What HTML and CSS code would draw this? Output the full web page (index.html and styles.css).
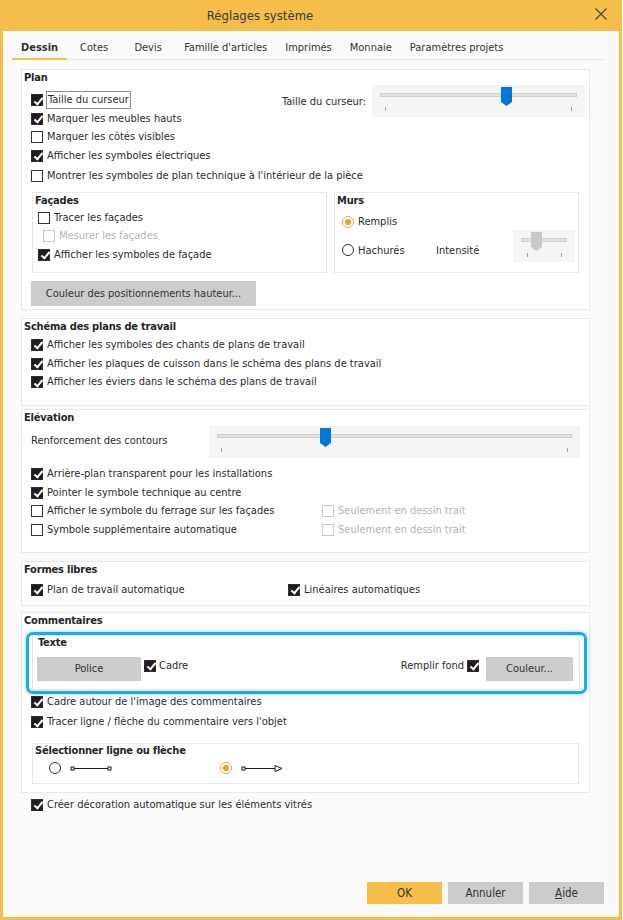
FILE: index.html
```html
<!DOCTYPE html>
<html lang="fr">
<head>
    <meta charset="UTF-8">
    <meta name="viewport" content="width=device-width, initial-scale=1.0">
    <title>Réglages système</title>
    <link rel="stylesheet" href="styles.css">
</head>
<body>
<div class="dialog">
    <div class="titlebar">
        <div class="title">Réglages système</div>
        <svg class="close" width="12" height="12" viewBox="0 0 12 12"><path d="M0.5 0.5L11.5 11.5M11.5 0.5L0.5 11.5" stroke="#454545" stroke-width="1.2" fill="none"/></svg>
    </div>

    <div class="tabs">
        <div class="tab active">Dessin</div>
        <div class="tab">Cotes</div>
        <div class="tab">Devis</div>
        <div class="tab">Famille d'articles</div>
        <div class="tab">Imprimés</div>
        <div class="tab">Monnaie</div>
        <div class="tab">Paramètres projets</div>
    </div>

    <div class="page">
        <!-- Plan -->
        <div class="group plan">
            <div class="group-title">Plan</div>
            <div class="plan-top">
                <div>
                    <div class="row"><span class="cb on"></span><span class="focus">Taille du curseur</span></div>
                    <div class="row"><span class="cb on"></span>Marquer les meubles hauts</div>
                    <div class="row"><span class="cb"></span>Marquer les côtés visibles</div>
                    <div class="row"><span class="cb on"></span>Afficher les symboles électriques</div>
                </div>
                <div class="slider-wrap">
                    <span>Taille du curseur:</span>
                    <div class="slider">
                        <svg width="213" height="32" viewBox="0 0 213 32">
                            <rect x="8.5" y="8.5" width="196" height="3" fill="#e2e4e4" stroke="#cdd0d0"/>
                            <path d="M13.5 22v4M199.5 22v4" stroke="#a0a0a0"/>
                            <path d="M129 2h11v15l-5.5 4l-5.5-4z" fill="#0078d7"/>
                        </svg>
                    </div>
                </div>
            </div>
            <div class="row montrer"><span class="cb"></span>Montrer les symboles de plan technique à l'intérieur de la pièce</div>

            <div class="subrow">
                <div class="box facades">
                    <div class="box-title">Façades</div>
                    <div class="row"><span class="cb"></span>Tracer les façades</div>
                    <div class="row indent dis"><span class="cb dis"></span>Mesurer les façades</div>
                    <div class="row"><span class="cb on"></span>Afficher les symboles de façade</div>
                </div>
                <div class="box murs">
                    <div class="box-title">Murs</div>
                    <div class="row remplis"><span class="rb on"></span>Remplis</div>
                    <div class="murs-row">
                        <div class="item hach"><span class="rb"></span>Hachurés</div>
                        <span class="intens">Intensité</span>
                        <div class="slider small">
                            <svg width="62" height="32" viewBox="0 0 62 32">
                                <rect x="8.5" y="8.5" width="45" height="3" fill="#e2e4e4" stroke="#cdd0d0"/>
                                <path d="M14.5 23v4M48.5 23v4" stroke="#a0a0a0"/>
                                <path d="M18 2h11v15l-5.5 4l-5.5-4z" fill="#c8c8c8"/>
                            </svg>
                        </div>
                    </div>
                </div>
            </div>

            <button class="btn hauteur">Couleur des positionnements hauteur...</button>
        </div>

        <!-- Schéma des plans de travail -->
        <div class="group schema">
            <div class="group-title">Schéma des plans de travail</div>
            <div class="rows">
                <div class="row"><span class="cb on"></span>Afficher les symboles des chants de plans de travail</div>
                <div class="row"><span class="cb on"></span>Afficher les plaques de cuisson dans le schéma des plans de travail</div>
                <div class="row"><span class="cb on"></span>Afficher les éviers dans le schéma des plans de travail</div>
            </div>
        </div>

        <!-- Elévation -->
        <div class="group elevation">
            <div class="group-title">Elévation</div>
            <div class="slider-row">
                <span>Renforcement des contours</span>
                <div class="slider">
                    <svg width="371" height="32" viewBox="0 0 371 32">
                        <rect x="8.5" y="8.5" width="354" height="3" fill="#e2e4e4" stroke="#cdd0d0"/>
                        <path d="M12.5 22v4M358.5 22v4" stroke="#a0a0a0"/>
                        <path d="M111 2h11v15l-5.5 4l-5.5-4z" fill="#0078d7"/>
                    </svg>
                </div>
            </div>
            <div class="rows">
                <div class="row"><span class="cb on"></span>Arrière-plan transparent pour les installations</div>
                <div class="row"><span class="cb on"></span>Pointer le symbole technique au centre</div>
                <div class="row">
                    <span class="item w287"><span class="cb"></span>Afficher le symbole du ferrage sur les façades</span>
                    <span class="item dis"><span class="cb dis"></span>Seulement en dessin trait</span>
                </div>
                <div class="row">
                    <span class="item w287"><span class="cb"></span>Symbole supplémentaire automatique</span>
                    <span class="item dis"><span class="cb dis"></span>Seulement en dessin trait</span>
                </div>
            </div>
        </div>

        <!-- Formes libres -->
        <div class="group formes">
            <div class="group-title">Formes libres</div>
            <div class="rows">
                <div class="row">
                    <span class="item w253"><span class="cb on"></span>Plan de travail automatique</span>
                    <span class="item"><span class="cb on"></span>Linéaires automatiques</span>
                </div>
            </div>
        </div>

        <!-- Commentaires -->
        <div class="group comments">
            <div class="group-title">Commentaires</div>
            <div class="highlight">
                <div class="box texte">
                    <div class="box-title">Texte</div>
                    <div class="texte-row">
                        <button class="btn police">Police</button>
                        <span class="item up"><span class="cb on"></span>Cadre</span>
                        <span class="item up fond">Remplir fond<span class="cb on"></span></span>
                        <button class="btn couleur">Couleur...</button>
                    </div>
                </div>
            </div>
            <div class="row cadre-img"><span class="cb on"></span>Cadre autour de l'image des commentaires</div>
            <div class="row tracer"><span class="cb on"></span>Tracer ligne / flèche du commentaire vers l'objet</div>

            <div class="box selection">
                <div class="box-title">Sélectionner ligne ou flèche</div>
                <div class="sel-row">
                    <span class="item w171">
                        <span class="rb"></span>
                        <svg width="42" height="7" viewBox="0 0 42 7">
                            <line x1="3.5" y1="3.5" x2="38.5" y2="3.5" stroke="#1a1a1a"/>
                            <rect x="1" y="2" width="3" height="3" fill="#fff" stroke="#1a1a1a"/>
                            <rect x="38" y="2" width="3" height="3" fill="#fff" stroke="#1a1a1a"/>
                        </svg>
                    </span>
                    <span class="item">
                        <span class="rb on"></span>
                        <svg width="42" height="9" viewBox="0 0 42 9">
                            <line x1="3.5" y1="4.5" x2="34" y2="4.5" stroke="#1a1a1a"/>
                            <rect x="1" y="3" width="3" height="3" fill="#fff" stroke="#1a1a1a"/>
                            <path d="M34 1.5L41 4.5L34 7.5Z" fill="#fff" stroke="#1a1a1a"/>
                        </svg>
                    </span>
                </div>
            </div>
        </div>

        <div class="row vitres"><span class="cb on"></span>Créer décoration automatique sur les éléments vitrés</div>
    </div>

    <div class="footer">
        <button class="btn ok">OK</button>
        <button class="btn">Annuler</button>
        <button class="btn"><u>A</u>ide</button>
    </div>
</div>
</body>
</html>
```

FILE: styles.css
```css
* {
    box-sizing: border-box;
}

body {
    margin: 0;
    font-family: "DejaVu Sans Condensed", "Liberation Sans Narrow", "Liberation Sans", sans-serif;
    font-size: 11px;
    color: #2b2b2b;
    background: #fff;
}

.dialog {
    width: 622px;
    height: 920px;
    border: 3px solid #f5be4b;
    border-top: 0;
    background: #fafafa;
    display: flex;
    flex-direction: column;
}

/* title bar */
.titlebar {
    height: 31px;
    margin: 0 -3px;
    background: #f5be4b;
    display: flex;
    align-items: center;
}

.title {
    flex: 1;
    text-align: center;
    padding-right: 75px;
    font-size: 13px;
    color: #3a3a3a;
}

.close {
    margin: 0 15px 3px 0;
}

/* tabs */
.tabs {
    display: flex;
    height: 29px;
    margin: 0 15px 0 9px;
    border-bottom: 1px solid #e6e6e6;
}

.tab {
    min-width: 54px;
    height: 29px;
    margin-bottom: -1px;
    padding: 10px 9px 0;
    font-size: 11px;
    line-height: 14px;
    text-align: center;
    color: #333;
}

.tab.active {
    font-weight: bold;
    border-bottom: 2px solid #f5be4b;
}

/* page */
.page {
    padding: 9px 29px 0 18px;
}

.group {
    background: #fff;
    border: 1px solid #e8e8e8;
}

.group-title,
.box-title {
    padding-left: 2px;
    font-weight: bold;
    line-height: 16px;
    letter-spacing: -0.2px;
    color: #252525;
}

.box {
    background: #fff;
    border: 1px solid #e8e8e8;
}

.row {
    display: flex;
    align-items: center;
    height: 18.5px;
    padding-left: 9px;
    gap: 4px;
    line-height: 14px;
    white-space: nowrap;
}

.item {
    display: flex;
    align-items: center;
    gap: 4px;
    white-space: nowrap;
}

.w287 { width: 287px; }
.w253 { width: 253px; }
.w171 { width: 171px; gap: 9px; }

.dis {
    color: #b3b3b3;
}

/* checkboxes & radios */
.cb {
    position: relative;
    flex: none;
    width: 12px;
    height: 12px;
    border: 1px solid #3d2c3a;
    background: #fff;
}

.cb.on {
    background: #1e1e1e;
    border-color: #3a2633;
}

.cb.on::after {
    content: "";
    position: absolute;
    left: 3.5px;
    top: 0.5px;
    width: 3px;
    height: 7px;
    border: solid #fff;
    border-width: 0 2px 2px 0;
    transform: rotate(40deg);
}

.cb.dis {
    border-color: #c9c9c9;
}

.rb {
    flex: none;
    width: 12px;
    height: 12px;
    border-radius: 50%;
    border: 1px solid #2f2f3a;
    background: #fff;
}

.rb.on {
    border-color: #e6ad48;
    background: radial-gradient(circle, #e2a73c 0 2.8px, #fff 3.3px);
}

.focus {
    padding: 1px 1px;
    outline: 1px solid #8a8a8a;
}

/* sliders */
.slider {
    flex: none;
    height: 32px;
    background: #f5f5f5;
}

.slider svg {
    display: block;
}

/* Plan */
.plan-top {
    display: flex;
    justify-content: space-between;
    margin-top: 5px;
}

.slider-wrap {
    display: flex;
    align-items: center;
    gap: 6px;
    height: 32px;
    margin: -6px 4px 0 0;
}

.montrer {
    margin-top: 2px;
}

.subrow {
    display: flex;
    gap: 7px;
    height: 81px;
    margin: 6.5px 10px 0;
}

.facades {
    width: 295px;
}

.facades .row {
    height: 18.3px;
    padding-left: 5px;
}

.facades .row.indent {
    padding-left: 10px;
}

.murs {
    flex: 1;
}

.murs .row {
    padding-left: 7px;
    height: 18px;
}

.remplis {
    margin-top: 4px;
}

.murs-row {
    display: flex;
    align-items: flex-start;
    height: 32px;
    margin-top: -1px;
    padding-left: 7px;
}

.hach {
    width: 94px;
    height: 18px;
    margin-top: 11px;
}

.intens {
    line-height: 18px;
    margin-top: 12px;
}

.slider.small {
    margin: 0 3px 0 auto;
}

/* buttons */
.btn {
    display: block;
    padding: 0;
    border: 0;
    font: inherit;
    color: #333;
    background: #cccccc;
}

.hauteur {
    width: 225px;
    height: 25px;
    margin: 8px 0 3px 9px;
}

/* Schéma */
.group.schema {
    margin-top: 8px;
}

.rows .row {
    height: 18.7px;
}

.schema .rows {
    margin-top: 0.6px;
    padding-bottom: 13px;
}

/* Elévation */
.group.elevation {
    margin-top: 3.6px;
}

.slider-row {
    display: flex;
    align-items: center;
    height: 32px;
    padding: 0 9px;
}

.slider-row span {
    margin-bottom: 3px;
}

.slider-row .slider {
    margin-left: auto;
}

.elevation .rows {
    margin-top: 6.3px;
    padding-bottom: 12.6px;
}

/* Formes libres */
.group.formes {
    margin-top: 8px;
}

.formes .rows {
    margin-top: 2.65px;
    padding-bottom: 5.65px;
}

/* Commentaires */
.group.comments {
    margin-top: 6.3px;
    padding-bottom: 8px;
}

.highlight {
    margin: 2.4px 2px 0 4px;
    padding: 0 4px 1px 3px;
    border: 3px solid #17ade6;
    border-radius: 7px;
    box-shadow: 0 0 4px rgba(20, 140, 200, 0.45);
}

.texte {
    height: 55px;
    padding: 0 6px 0 4px;
    border-color: #e2e2e2;
}

.texte .box-title {
    line-height: 14px;
    padding-left: 1px;
}

.texte-row {
    display: flex;
    align-items: center;
    height: 24px;
    margin-top: 7px;
}

.police {
    width: 104px;
    height: 24px;
    margin-right: 3px;
}

.up {
    gap: 3px;
    margin-bottom: 6px;
}

.fond {
    margin-left: auto;
    margin-right: 7px;
}

.couleur {
    width: 87px;
    height: 24px;
}

.cadre-img {
    height: 18.7px;
    margin-top: -1px;
}

.tracer {
    height: 18.7px;
    margin-top: 1.65px;
}

.selection {
    margin: 11.5px 10px 0;
    padding-bottom: 6px;
}

.selection .box-title {
    line-height: 14px;
}

.sel-row {
    display: flex;
    align-items: center;
    height: 18px;
    margin-top: 1px;
    padding-left: 16px;
}

.sel-row .item {
    gap: 9px;
}

.vitres {
    height: 18.7px;
    margin-top: 2.3px;
    padding-left: 10px;
}

/* footer */
.footer {
    display: flex;
    justify-content: flex-end;
    gap: 6px;
    margin-top: auto;
    padding: 0 15px 13px 0;
}

.footer .btn {
    width: 75px;
    height: 22px;
    font-size: 11.5px;
}

.footer .ok {
    background: #f5be4b;
}
```
